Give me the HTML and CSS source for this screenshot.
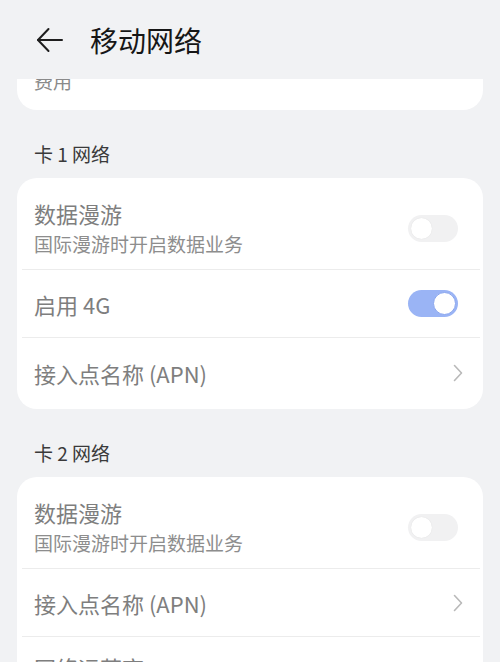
FILE: index.html
```html
<!DOCTYPE html>
<html lang="zh-CN">
<head>
    <meta charset="UTF-8">
    <meta name="viewport" content="width=device-width, initial-scale=1.0">
    <title>移动网络</title>
    <link rel="stylesheet" href="styles.css">
</head>
<body>
    <header class="top-bar">
        <button class="back-button" aria-label="返回">
            <svg width="28" height="26" viewBox="0 0 28 26" fill="none" stroke="#1e1e1e" stroke-width="2" stroke-linecap="round" stroke-linejoin="round">
                <path d="M26 13H2"/>
                <path d="M12.5 2L2 13l10.5 11"/>
            </svg>
        </button>
        <h1 class="page-title">移动网络</h1>
    </header>

    <main class="scroller">
        <div class="scroll-content">
            <section class="card card-cut">
                <div class="cut-text">费用</div>
            </section>

            <h2 class="section-title">卡 1 网络</h2>
            <section class="card">
                <div class="row row-tall">
                    <div class="row-text">
                        <div class="row-title">数据漫游</div>
                        <div class="row-sub">国际漫游时开启数据业务</div>
                    </div>
                    <span class="switch"><span class="knob"></span></span>
                </div>
                <div class="divider"></div>
                <div class="row">
                    <div class="row-title">启用 4G</div>
                    <span class="switch on"><span class="knob"></span></span>
                </div>
                <div class="divider"></div>
                <div class="row row-last">
                    <div class="row-title">接入点名称 (APN)</div>
                    <svg class="chevron" width="10" height="18" viewBox="0 0 10 18" fill="none" stroke="#b9b9b9" stroke-width="1.6" stroke-linecap="round" stroke-linejoin="round">
                        <path d="M1.5 1.5L8.5 9l-7 7.5"/>
                    </svg>
                </div>
            </section>

            <h2 class="section-title">卡 2 网络</h2>
            <section class="card">
                <div class="row row-tall">
                    <div class="row-text">
                        <div class="row-title">数据漫游</div>
                        <div class="row-sub">国际漫游时开启数据业务</div>
                    </div>
                    <span class="switch"><span class="knob"></span></span>
                </div>
                <div class="divider"></div>
                <div class="row">
                    <div class="row-title">接入点名称 (APN)</div>
                    <svg class="chevron" width="10" height="18" viewBox="0 0 10 18" fill="none" stroke="#b9b9b9" stroke-width="1.6" stroke-linecap="round" stroke-linejoin="round">
                        <path d="M1.5 1.5L8.5 9l-7 7.5"/>
                    </svg>
                </div>
                <div class="divider"></div>
                <div class="row row-operator">
                    <div class="row-title">网络运营商</div>
                    <svg class="chevron" width="10" height="18" viewBox="0 0 10 18" fill="none" stroke="#b9b9b9" stroke-width="1.6" stroke-linecap="round" stroke-linejoin="round">
                        <path d="M1.5 1.5L8.5 9l-7 7.5"/>
                    </svg>
                </div>
            </section>
        </div>
    </main>
</body>
</html>
```

FILE: styles.css
```css
body {
    font-family: 'Noto Sans CJK SC', 'Noto Sans', sans-serif;
    background-color: #f1f2f4;
    margin: 0;
    padding: 0;
    height: 662px;
    overflow: hidden;
}
.top-bar {
    display: flex;
    align-items: center;
    height: 79px;
    padding-left: 36px;
    box-sizing: border-box;
}
.back-button {
    display: flex;
    align-items: center;
    padding: 0;
    margin: 0 26px 0 0;
    background: transparent;
    border: none;
    cursor: pointer;
}
.page-title {
    margin: 0;
    font-size: 28px;
    font-weight: 400;
    line-height: 36px;
    color: #161616;
}
.scroller {
    height: 583px;
    overflow: hidden;
}
.scroll-content {
    margin-top: -11px;
    padding: 0 17px;
}
.card {
    background-color: #fff;
    border-radius: 20px;
}
.card-cut {
    border-radius: 0 0 20px 20px;
    padding: 0 17px 16px;
}
.cut-text {
    font-size: 19px;
    line-height: 26px;
    color: #8a8a8a;
}
.section-title {
    margin: 0;
    padding: 31px 17px 11px;
    font-size: 19px;
    font-weight: 400;
    line-height: 26px;
    color: #3a3a3a;
}
.row {
    display: flex;
    align-items: center;
    justify-content: space-between;
    height: 67px;
    padding: 0 20px 0 17px;
}
.row-tall {
    height: auto;
    padding-top: 21px;
    padding-bottom: 12px;
}
.row-last {
    height: 71px;
    padding-bottom: 1px;
    box-sizing: border-box;
}
.row-operator {
    align-items: flex-start;
    padding-top: 16px;
    box-sizing: border-box;
}
.row-operator .chevron {
    align-self: center;
}
.row-title {
    font-size: 22px;
    line-height: 28px;
    color: #7e7e7e;
}
.row-sub {
    margin-top: 4px;
    font-size: 19px;
    line-height: 26px;
    color: #8d8d8d;
}
.divider {
    height: 1px;
    margin: 0 3px 0 5px;
    background-color: #ececec;
}
.switch {
    display: flex;
    align-items: center;
    width: 50px;
    height: 27px;
    margin-right: 5px;
    padding: 0 3px;
    box-sizing: border-box;
    border-radius: 14px;
    background-color: #f1f1f2;
}
.switch .knob {
    width: 21px;
    height: 21px;
    border-radius: 50%;
    background-color: #fff;
    box-shadow: 0 0 1px rgba(0, 0, 0, 0.12);
}
.switch.on {
    justify-content: flex-end;
    padding: 0 2px;
    background-color: #9ab4f5;
}
.switch.on .knob {
    width: 21px;
    height: 21px;
    border: 1.5px solid #89a5ee;
    box-shadow: none;
}
.chevron {
    display: block;
}
```
